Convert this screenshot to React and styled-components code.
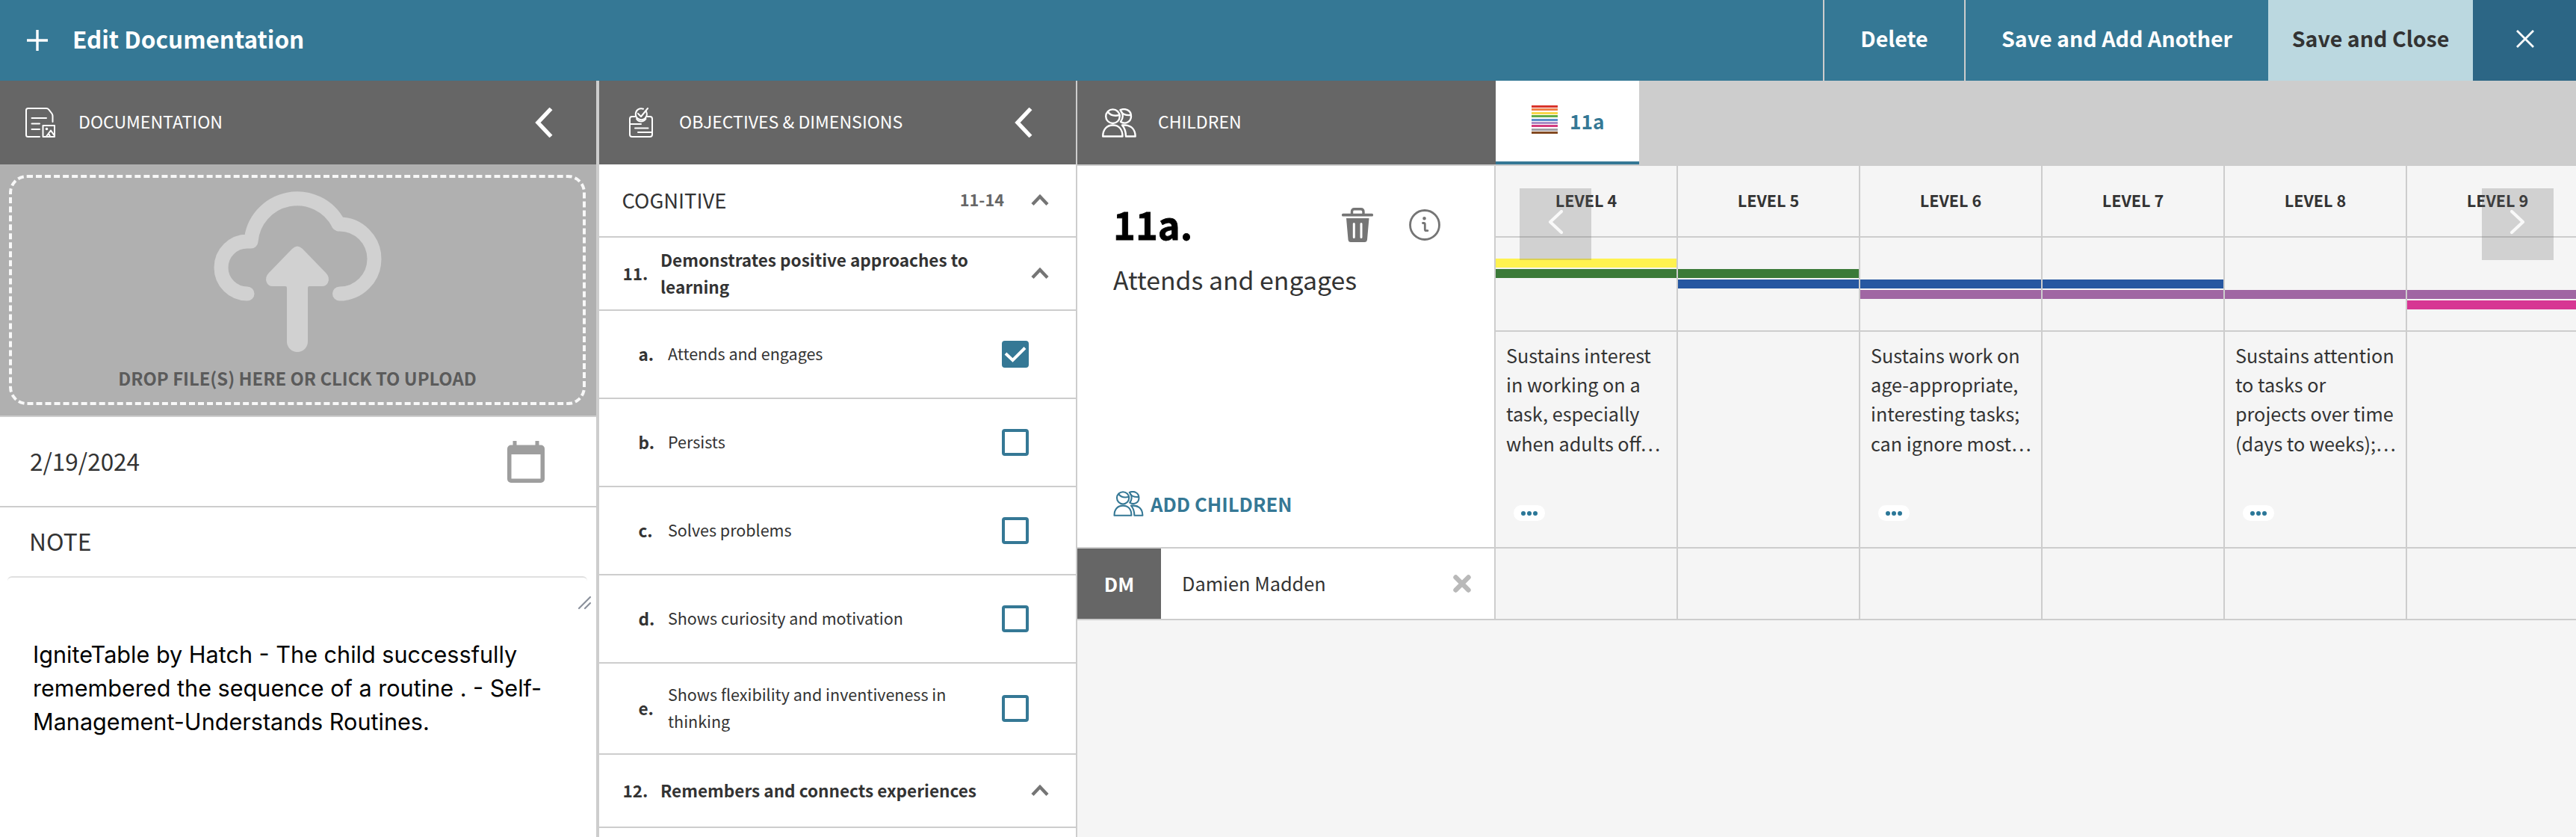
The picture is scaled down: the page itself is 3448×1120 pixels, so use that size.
import styled, { createGlobalStyle } from "styled-components";

const GlobalStyle = createGlobalStyle`
  * {
    box-sizing: border-box;
  }
  body {
    margin: 0;
    background: #f5f5f5;
    color: #333;
    font-family: "Noto Sans CJK SC", "Noto Sans", sans-serif;
  }
  svg {
    display: block;
    flex-shrink: 0;
  }
`;

const blue = "#357895";
const line = "#cdcdcd";

const Page = styled.div`
  display: flex;
  flex-direction: column;
  height: 1120px;
  overflow: hidden;
`;
const TopBar = styled.header`
  display: flex;
  flex-shrink: 0;
  height: 108px;
  background: ${blue};
  color: white;
`;
const TopTitle = styled.div`
  display: flex;
  flex: 1;
  align-items: center;
  padding-left: 36px;
  gap: 33px;
`;
const TitleText = styled.h1`
  margin: 0;
  padding-bottom: 7px;
  font-size: 31.5px;
  line-height: 40px;
`;
const TopButton = styled.button`
  display: flex;
  align-items: center;
  justify-content: center;
  width: ${(props) => props.$width}px;
  padding: 0 0 7px;
  border: none;
  border-left: ${(props) => (props.$divided ? `2px solid ${line}` : "none")};
  background: ${(props) => props.$background || blue};
  color: ${(props) => props.$color || "white"};
  font-family: inherit;
  font-size: 28.6px;
  font-weight: bold;
  line-height: 40px;
`;
const CloseButton = styled(TopButton)`
  padding: 0 0 4px 2px;
`;
const Columns = styled.div`
  display: flex;
  flex: 1;
  min-height: 0;
`;
const Panel = styled.section`
  display: flex;
  flex-direction: column;
  flex-shrink: 0;
  width: ${(props) => props.$width}px;
  border-right: ${(props) => props.$border}px solid ${line};
  background: white;
`;
const PanelHeader = styled.div`
  display: flex;
  align-items: center;
  flex-shrink: 0;
  width: ${(props) => props.$width};
  height: 112px;
  padding: 0 58px 0 ${(props) => props.$left}px;
  background: #666;
  color: white;
`;
const PanelTitle = styled.span`
  flex: 1;
  margin-left: ${(props) => props.$gap}px;
  padding-bottom: 4px;
  font-size: 23.1px;
  line-height: 32px;
`;

const UploadArea = styled.div`
  flex-shrink: 0;
  height: 338px;
  padding: 14px 14px 0 12px;
  border-bottom: 2px solid ${line};
  background: #b0b0b0;
`;
const DropZone = styled.div`
  display: flex;
  flex-direction: column;
  align-items: center;
  height: 308px;
  padding-top: 14px;
  border: 4px dashed #f8f8f8;
  border-radius: 24px;
`;
const DropText = styled.div`
  margin-top: 16px;
  color: #5b5b5b;
  font-size: 23.8px;
  font-weight: bold;
  line-height: 36px;
`;
const DateRow = styled.div`
  display: flex;
  align-items: center;
  justify-content: space-between;
  flex-shrink: 0;
  height: 121px;
  padding: 0 69px 0 40px;
  border-bottom: 2px solid ${line};
  font-size: 31.5px;
  line-height: 40px;
`;
const DateText = styled.span`
  padding-bottom: 3px;
`;
const NoteLabel = styled.div`
  flex-shrink: 0;
  height: 92px;
  padding: 24px 0 0 39px;
  font-size: 31.8px;
  line-height: 40px;
`;
const NoteBox = styled.div`
  display: flex;
  justify-content: flex-end;
  height: 46px;
  margin: 0 12px 0 10px;
  padding-top: 24px;
  border-top: 2px solid #e0e0e0;
  border-radius: 6px;
`;
const ResizeHandle = styled.div`
  margin-right: -6px;
`;
const NoteText = styled.p`
  width: 700px;
  margin: 36px 0 0 44px;
  color: black;
  font-family: Inter, sans-serif;
  font-size: 30.6px;
  line-height: 45px;
  white-space: pre-line;
`;

const ObjectiveRow = styled.div`
  display: flex;
  align-items: center;
  flex-shrink: 0;
  height: ${(props) => props.$height}px;
  padding-right: ${(props) => props.$right || 36}px;
  border-bottom: 2px solid ${line};
`;
const AreaName = styled.div`
  flex: 1;
  padding: 0 0 2px 30.5px;
  font-size: 27.4px;
  line-height: 40px;
`;
const AreaRange = styled.div`
  margin-right: 36px;
  padding-bottom: 3px;
  color: #666;
  font-size: 21.7px;
  font-weight: bold;
  line-height: 32px;
`;
const ObjectiveNumber = styled.div`
  width: ${(props) => props.$width}px;
  padding: 0 0 2px ${(props) => props.$indent}px;
  font-size: 22.5px;
  font-weight: bold;
  line-height: 36px;
`;
const ObjectiveText = styled.div`
  flex: 1;
  padding-bottom: 2px;
  font-size: ${(props) => (props.$bold ? 22.55 : 21.5)}px;
  font-weight: ${(props) => (props.$bold ? "bold" : "normal")};
  line-height: 36px;
  white-space: pre-line;
`;
const Checkbox = styled.div`
  display: flex;
  align-items: center;
  justify-content: center;
  width: 36px;
  height: 36px;
  border: 4px solid ${blue};
  border-radius: 4px;
  background: ${(props) => (props.$checked ? blue : "white")};
`;

const Main = styled.main`
  display: flex;
  flex: 1;
  flex-direction: column;
  min-width: 0;
`;
const MainHeader = styled.div`
  display: flex;
  flex-shrink: 0;
  height: 114px;
  border-bottom: 2px solid ${line};
  background: ${line};
`;
const Tab = styled.div`
  display: flex;
  align-items: center;
  width: 192px;
  padding-left: 48px;
  border-bottom: 4px solid ${blue};
  background: white;
  color: ${blue};
  font-size: 26.2px;
  font-weight: bold;
  line-height: 36px;
`;
const TabLabel = styled.span`
  margin-left: 16px;
`;
const Stripes = styled.div`
  display: flex;
  flex-direction: column;
  gap: 1.4px;
  margin-bottom: 4px;
`;
const Stripe = styled.div`
  width: 35px;
  height: 3px;
  background: ${(props) => props.$color};
`;
const Board = styled.div`
  display: flex;
  height: 608px;
`;
const ChildColumn = styled.div`
  flex-shrink: 0;
  width: 560px;
  border-right: 2px solid ${line};
  background: white;
`;
const DimensionCard = styled.div`
  display: flex;
  flex-direction: column;
  height: 512px;
  padding: 49px 72px 37px 48px;
  border-bottom: 2px solid ${line};
`;
const DimensionTop = styled.div`
  display: flex;
  align-items: center;
`;
const DimensionCode = styled.h2`
  flex: 1;
  margin: 0;
  padding-bottom: 4px;
  color: black;
  font-size: 50.7px;
  line-height: 56px;
  -webkit-text-stroke: 0.8px black;
`;
const IconGroup = styled.div`
  display: flex;
  align-items: center;
  gap: 48px;
`;
const DimensionName = styled.div`
  flex: 1;
  margin-top: 19px;
  font-size: 33.8px;
  line-height: 48px;
`;
const AddChildren = styled.div`
  display: flex;
  align-items: center;
  gap: 9px;
  height: 43px;
  color: ${blue};
  font-size: 25.7px;
  font-weight: bold;
  line-height: 36px;
`;
const ChildRow = styled.div`
  display: flex;
  align-items: center;
  height: 96px;
  border-bottom: 2px solid ${line};
`;
const Initials = styled.div`
  display: flex;
  align-items: center;
  justify-content: center;
  align-self: stretch;
  width: 112px;
  padding-bottom: 2px;
  background: #666;
  color: white;
  font-size: 25.8px;
  font-weight: bold;
`;
const ChildName = styled.div`
  flex: 1;
  padding: 0 0 2px 28px;
  font-size: 25.3px;
  line-height: 36px;
`;
const RemoveButton = styled.div`
  margin-right: 31px;
`;
const LevelsArea = styled.div`
  position: relative;
  flex: 1;
  min-width: 0;
  overflow: hidden;
`;
const Levels = styled.div`
  display: grid;
  grid-template-columns: repeat(6, 244px);
`;
const Level = styled.div`
  display: grid;
  grid-template-rows: 96px 126px 290px 96px;
  border-right: 2px solid ${line};
`;
const Cell = styled.div`
  border-bottom: 2px solid ${line};
`;
const LevelName = styled(Cell)`
  display: flex;
  align-items: center;
  justify-content: center;
  padding-bottom: 3px;
  font-size: 21.55px;
  font-weight: bold;
`;
const Bands = styled(Cell)`
  display: grid;
  grid-template-rows: repeat(5, 12px);
  gap: 2px;
  padding-top: 28px;
`;
const Band = styled.div`
  grid-row: ${(props) => props.$row};
  background: ${(props) => props.$color};
`;
const Description = styled(Cell)`
  display: flex;
  flex-direction: column;
  align-items: flex-start;
  justify-content: space-between;
  padding: 12px 0 35px 14px;
  font-size: 25.2px;
  line-height: 39.2px;
  white-space: pre;
`;
const MorePill = styled.div`
  display: flex;
  align-items: center;
  justify-content: center;
  gap: 2px;
  width: 42px;
  height: 21px;
  margin-left: 10px;
  border-radius: 10px;
  background: white;
`;
const Dot = styled.i`
  width: 6px;
  height: 6px;
  border-radius: 50%;
  background: #2b7798;
`;
const ScrollButton = styled.div`
  position: absolute;
  top: 30px;
  ${(props) => props.$side}: ${(props) => props.$offset}px;
  display: flex;
  align-items: center;
  justify-content: center;
  width: 96px;
  height: 96px;
  padding-bottom: 6px;
  background: rgba(96, 96, 96, 0.24);
`;

const PlusIcon = () => (
  <svg width="28" height="28" stroke="white" strokeWidth="3.4">
    <path d="M14 0v28M0 14h28" />
  </svg>
);
const CloseIcon = () => (
  <svg width="24" height="24" fill="none" stroke="white" strokeWidth="2.8">
    <path d="M1 1l22 22M23 1L1 23" />
  </svg>
);
const BackIcon = () => (
  <svg width="24" height="40" fill="none" stroke="white" strokeWidth="5.4">
    <path d="M21.5 1.5L4 20l17.5 18.5" />
  </svg>
);
const UpIcon = () => (
  <svg width="24" height="16" fill="none" stroke="#757575" strokeWidth="4.4">
    <path d="M2 13.5L12 3l10 10.5" />
  </svg>
);
const DocumentIcon = () => (
  <svg
    width="40"
    height="40"
    fill="none"
    stroke="white"
    strokeWidth="2"
    strokeLinecap="round"
    strokeLinejoin="round"
  >
    <path d="M19 39H3.5Q1 39 1 36.5V3.5Q1 1 3.5 1H28Q30 1 31.5 2.8L35.5 8Q36.5 9.5 36.5 12V19" />
    <path d="M8.5 14H28M8.5 21.5H19M8.5 29H19" />
    <rect x="23.5" y="24" width="15.5" height="15" />
    <path d="M28 38.5L34 30.5L38.500 37M31 34.5L33 38.5" />
    <circle cx="28.5" cy="28.5" r="0.8" fill="white" />
  </svg>
);
const ObjectivesIcon = () => (
  <svg
    width="32"
    height="40"
    fill="none"
    stroke="white"
    strokeWidth="2"
    strokeLinecap="round"
    strokeLinejoin="round"
  >
    <path d="M22.5 4.5A7.5 7.5 0 1 1 19 1.7" />
    <path d="M12 8l4 4L25 1" />
    <path d="M8 12H4Q1 12 1 15V36Q1 39 4 39H28Q31 39 31 36V15Q31 12 28 12H24.5" />
    <path d="M10 15Q12 18.5 16 18.5T22.5 15" />
    <path d="M1.5 22H16M8 27.5H25.5M12 33H30.5" />
  </svg>
);
const PeopleIcon = ({ width, height, color, stroke }) => (
  <svg
    width={width}
    height={height}
    viewBox="0 0 46 39"
    fill="none"
    stroke={color}
    strokeWidth={stroke}
    strokeLinejoin="round"
    strokeLinecap="round"
  >
    <circle cx="14.5" cy="10.7" r="9.3" />
    <path d="M8 5Q13 11.5 23.5 9" />
    <path d="M1.2 37.5C1.2 28 6.5 22.5 14.5 22.5S27.5 28 27.5 37.5Z" />
    <path d="M24.5 2.2C30.5-.5 39 2 39 10.5C39 18 31.5 22 25 18C28.5 13 28.5 7 24.5 2.2Z" />
    <path d="M26 5Q30 10 38.5 9" />
    <path d="M27 22.5H31C39.5 23 44.5 28.5 44.7 37.5H32C32 31 30.5 26.5 27 22.5Z" />
  </svg>
);
const CloudIcon = () => (
  <svg width="226" height="220" viewBox="285 252 226 220">
    <path
      d="M331 393A35 35 0 0 1 331 323H336A62 62 0 0 1 453 299.5Q453 300 454.5 300A46.500 46.500 0 0 1 454.5 393H460"
      fill="none"
      stroke="#d1d1d1"
      strokeWidth="19"
      strokeLinecap="round"
      strokeLinejoin="round"
    />
    <path
      d="M391 333Q398 326 405 333L436 365Q442 371 439 378Q437 383 431 383H414Q412 383 412 385V457A14 14 0 0 1 384 457V385Q384 383 382 383H365Q359 383 357 378Q354 371 360 365Z"
      fill="#d1d1d1"
    />
  </svg>
);
const CalendarIcon = () => (
  <svg width="50" height="56" fill="#9e9e9e">
    <path
      fillRule="evenodd"
      d="M7.5 0h5v5.5h25V0h5v5.5H45a5 5 0 0 1 5 5V51a5 5 0 0 1-5 5H5a5 5 0 0 1-5-5V10.5a5 5 0 0 1 5-5h2.5zM5.5 18v32.5h39V18z"
    />
  </svg>
);
const ResizeIcon = () => (
  <svg width="19" height="19" stroke="#8b919c" strokeWidth="2.2" strokeLinecap="round">
    <path d="M2 17L17 2M10 17l7-7" />
  </svg>
);
const CheckIcon = () => (
  <svg width="30" height="22" fill="none" stroke="white" strokeWidth="4">
    <path d="M2 10l9.5 9L28 2.5" />
  </svg>
);
const TrashIcon = () => (
  <svg width="42" height="46" fill="#757575">
    <path
      d="M13.5 9V5.5Q13.5 1.7 17 1.7H25.5Q29 1.7 29 5.5V9"
      fill="none"
      stroke="#757575"
      strokeWidth="3.4"
    />
    <rect y="7.8" width="42" height="3.6" rx="1.5" />
    <path
      fillRule="evenodd"
      d="M6 14H36.5L34 42.5Q33.6 46 30.5 46H12Q8.9 46 8.5 42.5ZM14.8 21.5V39.5Q14.8 41 16.3 41T17.8 39.5V21.5Q17.8 20 16.3 20T14.8 21.5ZM24.5 21.5V39.5Q24.5 41 26 41T27.5 39.5V21.5Q27.5 20 26 20T24.5 21.5Z"
    />
  </svg>
);
const InfoIcon = () => (
  <svg
    width="42"
    height="42"
    fill="none"
    stroke="#757575"
    strokeWidth="2.8"
    strokeLinecap="round"
    strokeLinejoin="round"
  >
    <circle cx="21" cy="21" r="19.5" />
    <circle cx="20.5" cy="12.3" r="0.9" fill="#757575" />
    <path d="M18.5 18.5h1.2q1.6 0 1.6 1.7v6.8q0 1.7 1.6 1.7h2" />
  </svg>
);
const RemoveIcon = () => (
  <svg width="24" height="24" stroke="#b9b9b9" strokeWidth="6.4" strokeLinecap="round">
    <path d="M3.5 3.5l17 17M20.5 3.5l-17 17" />
  </svg>
);
const ScrollIcon = ({ points }) => (
  <svg
    width="22"
    height="34"
    fill="none"
    stroke="#f9f9f9"
    strokeWidth="4.2"
    strokeLinecap="round"
    strokeLinejoin="round"
  >
    <polyline points={points} />
  </svg>
);

const stripeColors = [
  "#d9342b",
  "#f08048",
  "#f7d648",
  "#62ac46",
  "#5a8fca",
  "#a98cc4",
  "#d33c7e",
  "#a09ca3",
  "#834a22",
];
const bandColors = ["#fff24f", "#3b7a38", "#2657a1", "#a066a3", "#d73693"];

const dimensions = [
  { code: "a.", text: "Attends and engages", height: 118, checked: true },
  { code: "b.", text: "Persists", height: 118 },
  { code: "c.", text: "Solves problems", height: 118 },
  { code: "d.", text: "Shows curiosity and motivation", height: 118 },
  {
    code: "e.",
    text: "Shows flexibility and inventiveness in\nthinking",
    height: 122,
  },
];

// bands: rows of the colored bands this level belongs to
const levels = [
  {
    name: "LEVEL 4",
    bands: [1, 2],
    text: "Sustains interest\nin working on a\ntask, especially\nwhen adults off…",
  },
  { name: "LEVEL 5", bands: [2, 3] },
  {
    name: "LEVEL 6",
    bands: [3, 4],
    text: "Sustains work on\nage-appropriate,\ninteresting tasks;\ncan ignore most…",
  },
  { name: "LEVEL 7", bands: [3, 4] },
  {
    name: "LEVEL 8",
    bands: [4],
    text: "Sustains attention\nto tasks or\nprojects over time\n(days to weeks);…",
  },
  { name: "LEVEL 9", bands: [4, 5] },
];

const Header = () => (
  <TopBar>
    <TopTitle>
      <PlusIcon />
      <TitleText>Edit Documentation</TitleText>
    </TopTitle>
    <TopButton $width={189} $divided>
      Delete
    </TopButton>
    <TopButton $width={407} $divided>
      Save and Add Another
    </TopButton>
    <TopButton $width={274} $background="#bbd8e0" $color="#333">
      Save and Close
    </TopButton>
    <CloseButton $width={138} $background="#2c6685">
      <CloseIcon />
    </CloseButton>
  </TopBar>
);

const DocumentationPanel = () => (
  <Panel $width={802} $border={4}>
    <PanelHeader $left={34}>
      <DocumentIcon />
      <PanelTitle $gap={31}>DOCUMENTATION</PanelTitle>
      <BackIcon />
    </PanelHeader>
    <UploadArea>
      <DropZone>
        <CloudIcon />
        <DropText>DROP FILE(S) HERE OR CLICK TO UPLOAD</DropText>
      </DropZone>
    </UploadArea>
    <DateRow>
      <DateText>2/19/2024</DateText>
      <CalendarIcon />
    </DateRow>
    <NoteLabel>NOTE</NoteLabel>
    <NoteBox>
      <ResizeHandle>
        <ResizeIcon />
      </ResizeHandle>
    </NoteBox>
    <NoteText>
      {
        "IgniteTable by Hatch - The child successfully\nremembered the sequence of a routine . - Self-\nManagement-Understands Routines."
      }
    </NoteText>
  </Panel>
);

const ObjectiveTitle = ({ number, text }) => (
  <ObjectiveRow $height={98}>
    <ObjectiveNumber $width={82} $indent={31.5}>
      {number}
    </ObjectiveNumber>
    <ObjectiveText $bold>{text}</ObjectiveText>
    <UpIcon />
  </ObjectiveRow>
);

const ObjectivesPanel = () => (
  <Panel $width={640} $border={2}>
    <PanelHeader $left={40}>
      <ObjectivesIcon />
      <PanelTitle $gap={35}>{"OBJECTIVES & DIMENSIONS"}</PanelTitle>
      <BackIcon />
    </PanelHeader>
    <ObjectiveRow $height={98}>
      <AreaName>COGNITIVE</AreaName>
      <AreaRange>11-14</AreaRange>
      <UpIcon />
    </ObjectiveRow>
    <ObjectiveTitle
      number="11."
      text={"Demonstrates positive approaches to\nlearning"}
    />
    {dimensions.map((item) => (
      <ObjectiveRow key={item.code} $height={item.height} $right={63}>
        <ObjectiveNumber $width={92} $indent={52.5}>
          {item.code}
        </ObjectiveNumber>
        <ObjectiveText>{item.text}</ObjectiveText>
        <Checkbox $checked={item.checked}>
          {item.checked ? <CheckIcon /> : ""}
        </Checkbox>
      </ObjectiveRow>
    ))}
    <ObjectiveTitle number="12." text="Remembers and connects experiences" />
  </Panel>
);

const ChildrenColumn = () => (
  <ChildColumn>
    <DimensionCard>
      <DimensionTop>
        <DimensionCode>11a.</DimensionCode>
        <IconGroup>
          <TrashIcon />
          <InfoIcon />
        </IconGroup>
      </DimensionTop>
      <DimensionName>Attends and engages</DimensionName>
      <AddChildren>
        <PeopleIcon width={41} height={34} color={blue} stroke={2.4} />
        ADD CHILDREN
      </AddChildren>
    </DimensionCard>
    <ChildRow>
      <Initials>DM</Initials>
      <ChildName>Damien Madden</ChildName>
      <RemoveButton>
        <RemoveIcon />
      </RemoveButton>
    </ChildRow>
  </ChildColumn>
);

const LevelColumn = ({ level }) => (
  <Level>
    <LevelName>{level.name}</LevelName>
    <Bands>
      {level.bands.map((row) => (
        <Band key={row} $row={row} $color={bandColors[row - 1]} />
      ))}
    </Bands>
    <Description>
      {level.text}
      {level.text && (
        <MorePill>
          <Dot />
          <Dot />
          <Dot />
        </MorePill>
      )}
    </Description>
    <Cell />
  </Level>
);

export default function App() {
  return (
    <Page>
      <GlobalStyle />
      <Header />
      <Columns>
        <DocumentationPanel />
        <ObjectivesPanel />
        <Main>
          <MainHeader>
            <PanelHeader $width="560px" $left={33}>
              <PeopleIcon width={46} height={39} color="white" stroke={2.4} />
              <PanelTitle $gap={29}>CHILDREN</PanelTitle>
            </PanelHeader>
            <Tab>
              <Stripes>
                {stripeColors.map((color) => (
                  <Stripe key={color} $color={color} />
                ))}
              </Stripes>
              <TabLabel>11a</TabLabel>
            </Tab>
          </MainHeader>
          <Board>
            <ChildrenColumn />
            <LevelsArea>
              <Levels>
                {levels.map((level) => (
                  <LevelColumn key={level.name} level={level} />
                ))}
              </Levels>
              <ScrollButton $side="left" $offset={32}>
                <ScrollIcon points="19,3 4,17 19,31" />
              </ScrollButton>
              <ScrollButton $side="right" $offset={30}>
                <ScrollIcon points="3,3 18,17 3,31" />
              </ScrollButton>
            </LevelsArea>
          </Board>
        </Main>
      </Columns>
    </Page>
  );
}
